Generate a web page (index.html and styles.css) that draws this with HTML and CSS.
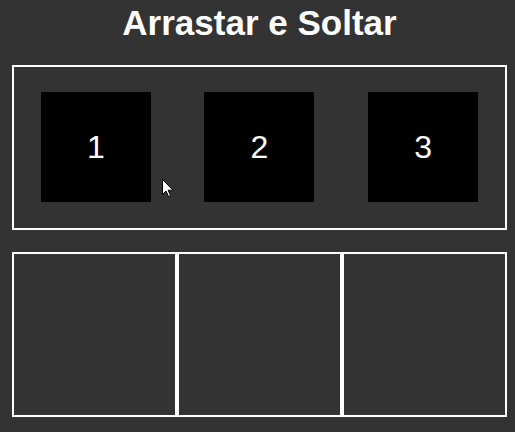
FILE: index.html
```html
<!DOCTYPE html>
<html lang="pt">
<head>
<meta charset="utf-8">
<title>Arrastar e Soltar</title>
<link rel="stylesheet" href="styles.css">
</head>
<body>
<div class="page">
  <h1 class="title">Arrastar e Soltar</h1>
  <div class="source">
    <div class="item">1</div>
    <div class="item">2</div>
    <div class="item">3</div>
  </div>
  <div class="targets">
    <div class="slot"></div>
    <div class="slot"></div>
    <div class="slot"></div>
  </div>
  <svg class="cursor" width="13" height="20" viewBox="0 0 13 20" aria-hidden="true">
    <path d="M0.5 0.5 L0.5 15.5 L4 12 L6.5 17.5 L8.5 16.6 L6.1 11.2 L11 11.2 Z" fill="#fff" stroke="#000" stroke-width="1" stroke-linejoin="miter"/>
  </svg>
</div>
</body>
</html>
```
FILE: styles.css
```css
html, body {
  margin: 0;
  padding: 0;
  background: #333333;
}
body {
  font-family: "Liberation Sans", Arial, sans-serif;
  color: #ffffff;
}
.page {
  position: relative;
  width: 495px;
  margin-left: 12px;
  padding-top: 3px;
}
.title {
  margin: 0;
  font-size: 35px;
  font-weight: bold;
  line-height: 40px;
  text-align: center;
  color: #ffffff;
}
.source {
  margin-top: 22px;
  height: 161px;
  border: 2px solid #ffffff;
  display: flex;
  justify-content: space-around;
  align-items: center;
}
.item {
  width: 110px;
  height: 110px;
  margin-top: -1px;
  background: #000000;
  color: #ffffff;
  font-size: 32px;
  display: flex;
  align-items: center;
  justify-content: center;
}
.targets {
  margin-top: 22px;
  display: flex;
}
.slot {
  width: 161px;
  height: 161px;
  border: 2px solid #ffffff;
}
.cursor {
  position: absolute;
  left: 150px;
  top: 179px;
}
```
